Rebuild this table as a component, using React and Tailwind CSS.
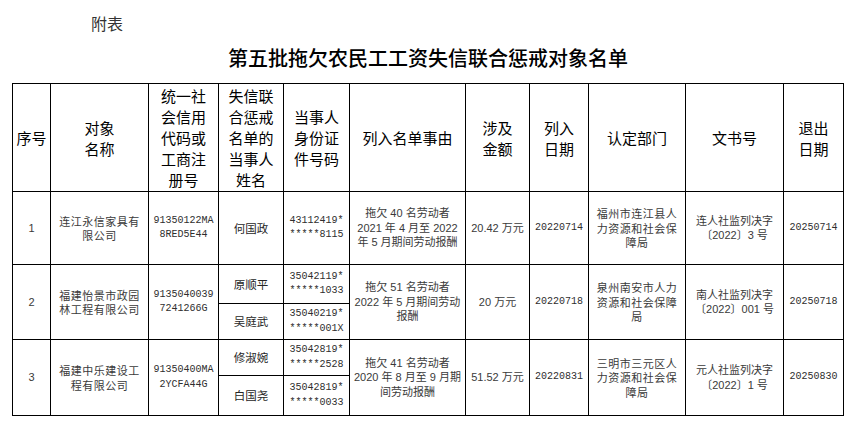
import React from 'react';

const cjk = "font-['Noto_Sans_CJK_SC','Noto_Sans',sans-serif]";
const mixed = "font-['Liberation_Sans','Noto_Sans_CJK_SC',sans-serif]";
const mono = "font-['Liberation_Mono','Noto_Sans_CJK_SC',monospace]";

const cols = [38, 98, 70, 65, 66, 116, 64, 59, 97, 98, 60];

const Lines = ({ lines }) =>
  lines.map((l, i) => (
    <React.Fragment key={i}>
      {i > 0 && <br />}
      {l}
    </React.Fragment>
  ));

const rows = [
  {
    no: '1',
    name: ['连江永信家具有', '限公司'],
    code: ['91350122MA', '8RED5E44'],
    people: [{ n: '何国政', id: ['43112419*', '*****8115'], h: 'h-[73px]' }],
    reason: ['拖欠 40 名劳动者', '2021 年 4 月至 2022', '年 5 月期间劳动报酬'],
    amount: '20.42 万元',
    date: '20220714',
    dept: ['福州市连江县人', '力资源和社会保', '障局'],
    doc: ['连人社监列决字', '〔2022〕3 号'],
    out: '20250714',
  },
  {
    no: '2',
    name: ['福建怡景市政园', '林工程有限公司'],
    code: ['9135040039', '7241266G'],
    people: [
      { n: '原顺平', id: ['35042119*', '*****1033'], h: 'h-[39px]' },
      { n: '吴庭武', id: ['35040219*', '*****001X'], h: 'h-[36px]' },
    ],
    reason: ['拖欠 51 名劳动者', '2022 年 5 月期间劳动', '报酬'],
    amount: '20 万元',
    date: '20220718',
    dept: ['泉州南安市人力', '资源和社会保障', '局'],
    doc: ['南人社监列决字', '〔2022〕001 号'],
    out: '20250718',
  },
  {
    no: '3',
    name: ['福建中乐建设工', '程有限公司'],
    code: ['91350400MA', '2YCFA44G'],
    people: [
      { n: '修淑婉', id: ['35042819*', '*****2528'], h: 'h-[36px]' },
      { n: '白国尧', id: ['35042819*', '*****0033'], h: 'h-[40px]' },
    ],
    reason: ['拖欠 41 名劳动者', '2020 年 8 月至 9 月期', '间劳动报酬'],
    amount: '51.52 万元',
    date: '20220831',
    dept: ['三明市三元区人', '力资源和社会保', '障局'],
    doc: ['元人社监列决字', '〔2022〕1 号'],
    out: '20250830',
  },
];

const headers = [
  ['序号'],
  ['对象', '名称'],
  ['统一社', '会信用', '代码或', '工商注', '册号'],
  ['失信联', '合惩戒', '名单的', '当事人', '姓名'],
  ['当事人', '身份证', '件号码'],
  ['列入名单事由'],
  ['涉及', '金额'],
  ['列入', '日期'],
  ['认定部门'],
  ['文书号'],
  ['退出', '日期'],
];

const td = 'border border-black text-center align-middle p-0';
const txt = `${td} ${mixed} text-[11px] leading-[14.5px] text-[#3a3a3a]`;
const zh = `${td} ${cjk} text-[11px] leading-[14.5px] text-[#3a3a3a] tracking-[0.5px]`;
const num = `${td} ${mono} text-[10px] leading-[14.5px] text-[#2e2e2e]`;
const who = `${td} ${cjk} text-[11.5px] leading-[14.5px] text-[#262626]`;

export default function App() {
  return (
    <div className="w-[856px] h-[424px] bg-white overflow-hidden">
      <div className={`${cjk} pl-[91px] pt-[13px] h-[33px] text-[16px] leading-[20px] text-[#333]`}>附表</div>
      <div className={`${cjk} h-[50px] pt-[11px] text-center text-[20px] leading-[28px] font-medium text-black`}>
        第五批拖欠农民工工资失信联合惩戒对象名单
      </div>
      <table className="ml-[12px] w-[831px] table-fixed border-collapse">
        <colgroup>
          {cols.map((w, i) => (
            <col key={i} style={{ width: w }} />
          ))}
        </colgroup>
        <tbody>
          <tr className="h-[108px]">
            {headers.map((h, i) => (
              <td key={i} className={`${td} ${cjk} text-[15px] leading-[21px] text-black`}>
                <Lines lines={h} />
              </td>
            ))}
          </tr>
          {rows.map((r) =>
            r.people.map((p, pi) => (
              <tr key={r.no + pi} className={p.h}>
                {pi === 0 && (
                  <>
                    <td rowSpan={r.people.length} className={txt}>{r.no}</td>
                    <td rowSpan={r.people.length} className={zh}>
                      <Lines lines={r.name} />
                    </td>
                    <td rowSpan={r.people.length} className={num}>
                      <Lines lines={r.code} />
                    </td>
                  </>
                )}
                <td className={who}>{p.n}</td>
                <td className={num}>
                  <Lines lines={p.id} />
                </td>
                {pi === 0 && (
                  <>
                    <td rowSpan={r.people.length} className={txt}>
                      <Lines lines={r.reason} />
                    </td>
                    <td rowSpan={r.people.length} className={txt}>{r.amount}</td>
                    <td rowSpan={r.people.length} className={num}>{r.date}</td>
                    <td rowSpan={r.people.length} className={zh}>
                      <Lines lines={r.dept} />
                    </td>
                    <td rowSpan={r.people.length} className={txt}>
                      <Lines lines={r.doc} />
                    </td>
                    <td rowSpan={r.people.length} className={num}>{r.out}</td>
                  </>
                )}
              </tr>
            ))
          )}
        </tbody>
      </table>
    </div>
  );
}
